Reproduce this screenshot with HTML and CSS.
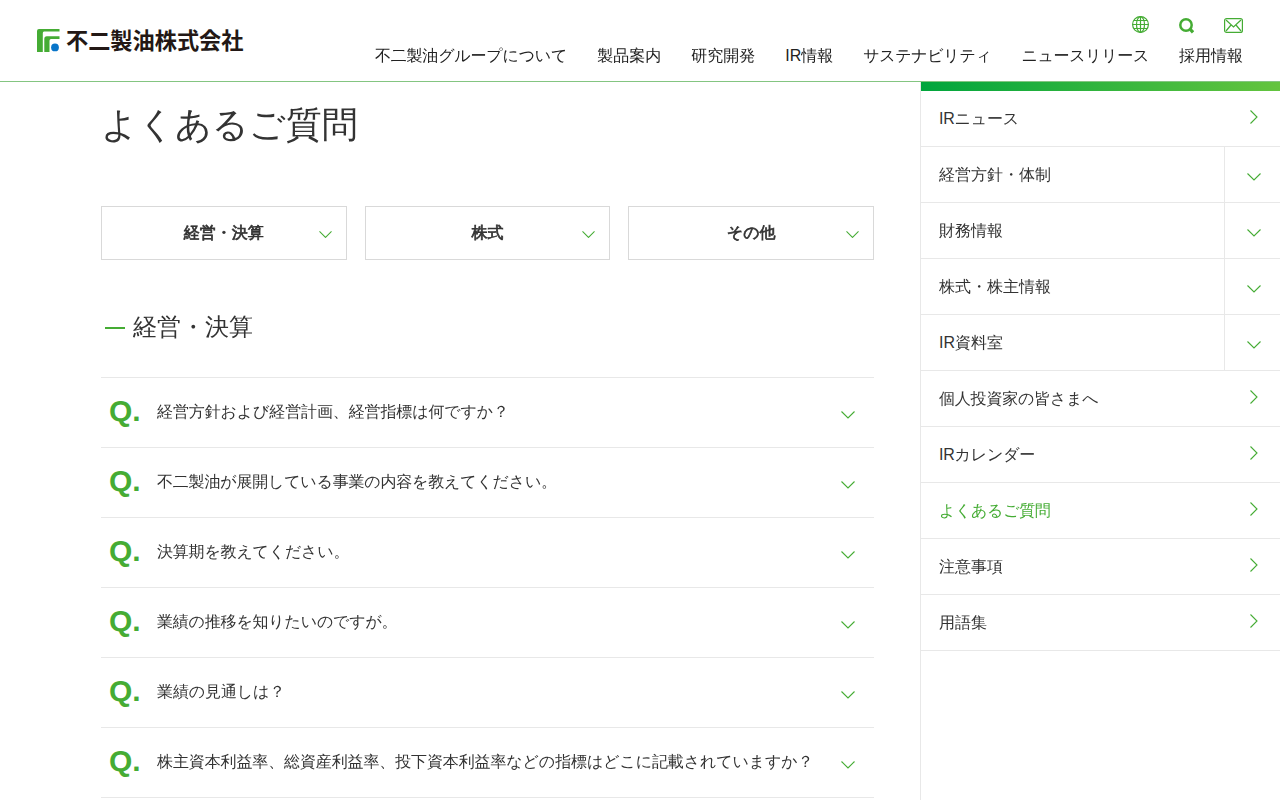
FILE: index.html
```html
<!DOCTYPE html>
<html lang="ja">
<head>
<meta charset="utf-8">
<title>よくあるご質問 | 不二製油株式会社</title>
<link rel="stylesheet" href="styles.css">
</head>
<body>
<svg width="0" height="0" class="defs">
  <symbol id="down" viewBox="0 0 14 8"><path d="M.5 .5 7 7 13.5 .5"/></symbol>
  <symbol id="right" viewBox="0 0 8 14"><path d="M.5 .5 7 7 .5 13.5"/></symbol>
</svg>
<header class="header">
  <a class="logo">
    <svg class="logo-mark" width="23" height="24" viewBox="0 0 23 24">
      <path fill="#45ac34" d="M0 24V3Q0 1 2 1H22.500V3.500H7Q5.800 3.500 5.800 5V24Z"/>
      <path fill="#45ac34" d="M7.300 24V11Q7.300 8.300 9.800 8.300H22.500V11H14Q12.500 11 12.500 12.700V24Z"/>
      <circle cx="18" cy="19.400" r="3.900" fill="#0875c9"/>
    </svg>
    <span class="logo-name">不二製油株式会社</span>
  </a>
  <div class="header-right">
    <div class="tools">
      <svg class="globe" width="17" height="17" viewBox="0 0 17 17"><g class="stroke"><circle cx="8.500" cy="8.500" r="7.900"/><ellipse cx="8.500" cy="8.500" rx="4" ry="7.900"/><path d="M8.500 .6V16.400M.6 8.500H16.400M2 4.500H15M2 12.500H15"/></g></svg>
      <svg class="search" width="15" height="16" viewBox="0 0 15 16"><circle cx="7" cy="7" r="5.700" fill="none" stroke="#45ac34" stroke-width="2.500"/><path d="M10.500 10.500 14 14.300" stroke="#45ac34" stroke-width="3.200"/></svg>
      <svg width="19" height="15" viewBox="0 0 19 15"><g class="stroke"><rect x=".6" y=".6" width="17.800" height="13.800" rx="2"/><path d="M2 2 9.500 9 17 2M2 13 7 7M17 13 12 7"/></g></svg>
    </div>
    <nav class="nav">
      <a class="mixed">不二製油グループについて</a><a>製品案内</a><a>研究開発</a><a>IR情報</a><a class="kana">サステナビリティ</a><a class="kana">ニュースリリース</a><a>採用情報</a>
    </nav>
  </div>
</header>
<div class="page">
  <main class="main">
    <h1>よくあるご質問</h1>
    <div class="anchors">
      <a>経営・決算<svg class="down small"><use href="#down"/></svg></a>
      <a>株式<svg class="down small"><use href="#down"/></svg></a>
      <a>その他<svg class="down small"><use href="#down"/></svg></a>
    </div>
    <h2>経営・決算</h2>
    <ul class="faq">
      <li><b>Q.</b><span>経営方針および経営計画、経営指標は何ですか？</span><svg class="down"><use href="#down"/></svg></li>
      <li><b>Q.</b><span class="mixed">不二製油が展開している事業の内容を教えてください。</span><svg class="down"><use href="#down"/></svg></li>
      <li><b>Q.</b><span class="mixed">決算期を教えてください。</span><svg class="down"><use href="#down"/></svg></li>
      <li><b>Q.</b><span class="mixed">業績の推移を知りたいのですが。</span><svg class="down"><use href="#down"/></svg></li>
      <li><b>Q.</b><span>業績の見通しは？</span><svg class="down"><use href="#down"/></svg></li>
      <li><b>Q.</b><span>株主資本利益率、総資産利益率、投下資本利益率などの指標はどこに記載されていますか？</span><svg class="down"><use href="#down"/></svg></li>
    </ul>
  </main>
  <aside class="side">
    <ul>
      <li><a class="mixed">IRニュース</a><svg class="right"><use href="#right"/></svg></li>
      <li><a>経営方針・体制</a><span class="toggle"><svg class="down"><use href="#down"/></svg></span></li>
      <li><a>財務情報</a><span class="toggle"><svg class="down"><use href="#down"/></svg></span></li>
      <li><a>株式・株主情報</a><span class="toggle"><svg class="down"><use href="#down"/></svg></span></li>
      <li><a>IR資料室</a><span class="toggle"><svg class="down"><use href="#down"/></svg></span></li>
      <li><a class="mixed">個人投資家の皆さまへ</a><svg class="right"><use href="#right"/></svg></li>
      <li><a class="mixed">IRカレンダー</a><svg class="right"><use href="#right"/></svg></li>
      <li class="current"><a class="kana">よくあるご質問</a><svg class="right"><use href="#right"/></svg></li>
      <li><a>注意事項</a><svg class="right"><use href="#right"/></svg></li>
      <li><a>用語集</a><svg class="right"><use href="#right"/></svg></li>
    </ul>
  </aside>
</div>
</body>
</html>
```
FILE: styles.css
```css
* { box-sizing: border-box; }
body {
  margin: 0;
  height: 800px;
  overflow: hidden;
  background: #fff;
  color: #333;
  font: 16px/24px "Liberation Sans", "WenQuanYi Zen Hei", "Noto Sans CJK JP", sans-serif;
}
ul { margin: 0; padding: 0; list-style: none; }
h1, h2 { margin: 0; font-weight: 400; }
.defs { display: block; }
.mixed, .faq .mixed { letter-spacing: -.2px; }
.kana { letter-spacing: -.34px; }
.header {
  display: flex;
  justify-content: space-between;
  height: 82px;
  padding: 0 37px;
  border-bottom: 1px solid #84c581;
}
.logo { display: flex; gap: 6px; padding-top: 28px; }
.logo-name {
  margin-top: -1px;
  color: #231815;
  font: 700 22.2px/25px "Noto Sans CJK JP", sans-serif;
  white-space: nowrap;
}
.header-right { display: flex; flex-direction: column; align-items: flex-end; }
.tools { display: flex; align-items: center; gap: 30px; height: 18px; margin-top: 16px; }
.tools svg { display: block; }
.tools .globe { margin-top: -2px; }
.tools .search { margin-top: 2px; }
.stroke { fill: none; stroke: #45ac34; stroke-width: 1.2; }
.nav { display: flex; gap: 30px; margin-top: 10px; color: #222; white-space: nowrap; }
.page { display: flex; height: 718px; }
.main { width: 920px; padding: 17px 46px 0 101px; }
h1 { font-size: 36px; line-height: 52px; letter-spacing: .1px; }
.anchors { display: grid; grid-template-columns: repeat(3, 1fr); gap: 18px; margin-top: 55px; }
.anchors a {
  position: relative;
  height: 54px;
  border: 1px solid #d9d9d9;
  text-align: center;
  font-weight: 700;
  line-height: 52px;
  -webkit-text-stroke: .7px #333;
}
.down, .right { flex: none; fill: none; stroke: #45ac34; stroke-width: 1.1; }
.down { width: 14px; height: 8px; }
.right { width: 8px; height: 14px; }
.down.small { position: absolute; right: 14px; top: 24px; width: 13px; height: 7.4px; -webkit-text-stroke: 0; }
h2 {
  display: flex;
  align-items: center;
  gap: 8px;
  height: 36px;
  margin-top: 49px;
  padding-left: 4px;
  font-size: 24px;
  line-height: 36px;
}
h2::before { content: ""; width: 20px; height: 2px; margin-top: 2px; background: #45ac34; }
.faq { margin-top: 32px; border-top: 1px solid #e8e8e8; }
.faq li {
  display: flex;
  align-items: center;
  height: 70px;
  padding: 0 19px 0 8px;
  border-bottom: 1px solid #e8e8e8;
}
.faq b { width: 48px; padding-bottom: 4px; color: #45ac34; font-size: 30px; line-height: 34px; }
.faq span { flex: 1; padding-bottom: 2px; letter-spacing: -.12px; white-space: nowrap; }
.faq .down { margin-top: 4px; }
.side { flex: 1; border-left: 1px solid #e8e8e8; }
.side::before {
  content: "";
  display: block;
  height: 9px;
  background: linear-gradient(90deg, #00a53c, #64c43f);
}
.side li {
  display: flex;
  align-items: center;
  justify-content: space-between;
  height: 56px;
  padding-left: 18px;
  border-bottom: 1px solid #e8e8e8;
}
.side .right { margin: 0 22px 4px 0; }
.toggle {
  display: flex;
  align-items: center;
  width: 56px;
  height: 55px;
  padding: 4px 0 0 22px;
  border-left: 1px solid #e8e8e8;
}
.current { color: #45ac34; }
```
